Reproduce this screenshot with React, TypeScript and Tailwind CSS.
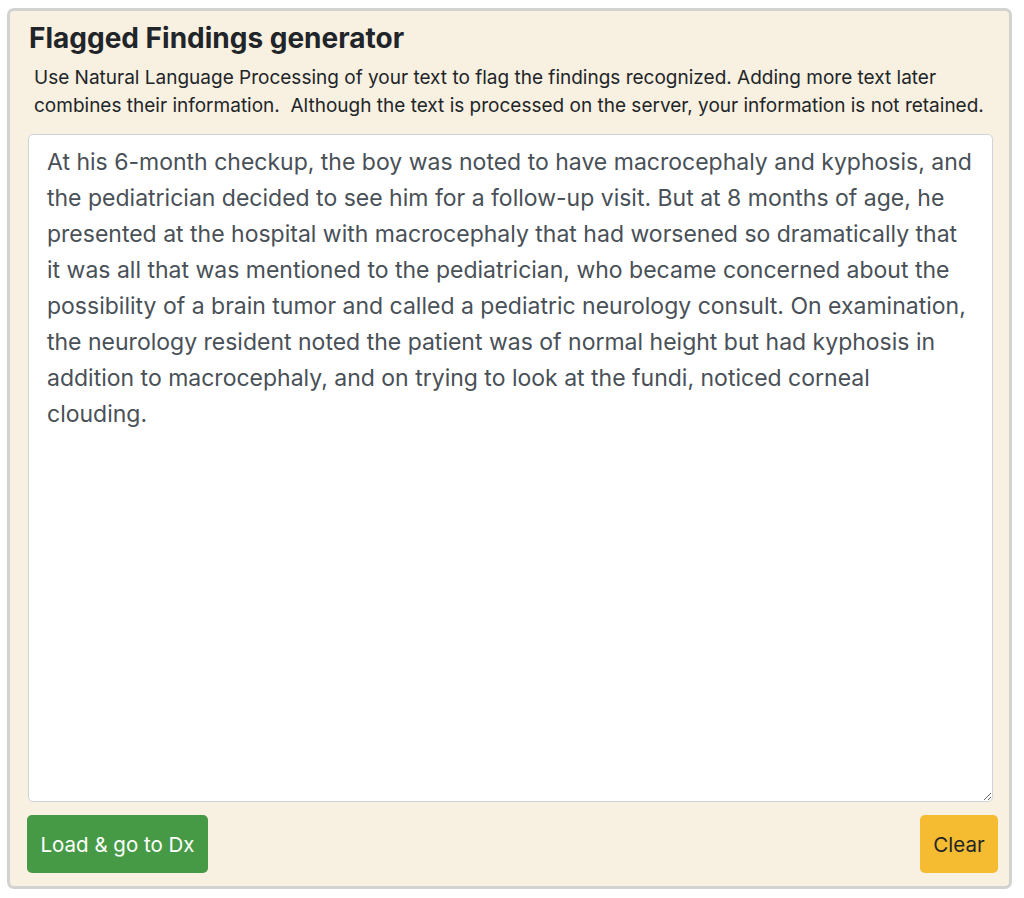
import React from "react";

const TEXT =
  "At his 6-month checkup, the boy was noted to have macrocephaly and kyphosis, and the pediatrician decided to see him for a follow-up visit. But at 8 months of age, he presented at the hospital with macrocephaly that had worsened so dramatically that it was all that was mentioned to the pediatrician, who became concerned about the possibility of a brain tumor and called a pediatric neurology consult. On examination, the neurology resident noted the patient was of normal height but had kyphosis in addition to macrocephaly, and on trying to look at the fundi, noticed corneal clouding.";

export default function App() {
  return (
    <div
      className="w-[1024px] h-[898px] bg-white pt-[8px] pl-[7px]"
      style={{ fontFamily: "Inter, 'Liberation Sans', sans-serif" }}
    >
      <div className="w-[1005px] h-[881px] rounded-[7px] border-[3px] border-[#d2d2d0] bg-[#f8f0e0] pl-[18px] pr-[10px] pt-[10px] flex flex-col">
        <h1 className="text-[28px] leading-[34px] font-bold text-[#212529] pl-[1px]">
          Flagged Findings generator
        </h1>
        <p className="text-[19px] leading-[28px] text-[#212529] pl-[6px] mt-[9px] whitespace-nowrap">
          Use Natural Language Processing of your text to flag the findings recognized. Adding more text later
          <br />
          combines their information.&nbsp; Although the text is processed on the server, your information is not retained.
        </p>
        <textarea
          className="mt-[14px] w-[965px] h-[668px] bg-white border border-[#ced4da] rounded-[5px] pl-[18px] pr-[19px] py-[9px] text-[23px] leading-[36px] text-[#495057] outline-none"
          defaultValue={TEXT}
          style={{ fontFamily: "Inter, 'Liberation Sans', sans-serif" }}
        />
        <div className="flex justify-between mt-[13px] w-[971px] -ml-[1px]">
          <button className="h-[58px] w-[181px] pt-[3px] rounded-[5px] bg-[#479a45] text-white text-[20.5px]">
            Load &amp; go to Dx
          </button>
          <button className="h-[58px] w-[78px] pt-[3px] rounded-[5px] bg-[#f5bb31] text-[#212529] text-[20.5px]">
            Clear
          </button>
        </div>
      </div>
    </div>
  );
}
